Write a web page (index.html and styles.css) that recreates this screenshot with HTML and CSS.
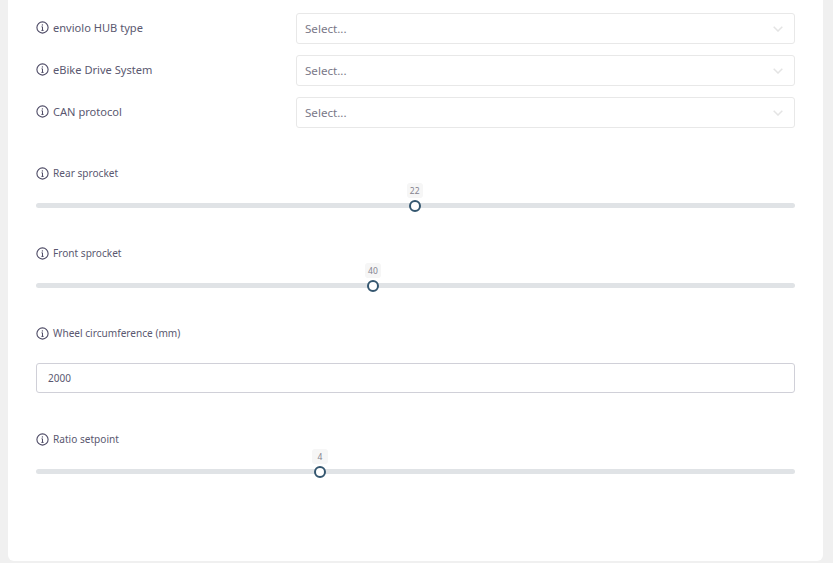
FILE: index.html
```html
<!DOCTYPE html>
<html lang="en">
<head>
<meta charset="utf-8">
<title>Configuration</title>
<link rel="stylesheet" href="styles.css">
</head>
<body>
<svg class="defs" width="0" height="0" aria-hidden="true">
  <symbol id="info" viewBox="0 0 13 13">
    <circle cx="6.5" cy="6.5" r="5.6" fill="none" stroke="currentColor" stroke-width="1.1"/>
    <path d="M6.5 5.8v3.6M5.4 9.4h2.2M5.5 5.8h1" fill="none" stroke="currentColor" stroke-width="1"/>
    <circle cx="6.4" cy="3.9" r=".7" fill="currentColor"/>
  </symbol>
  <symbol id="chev" viewBox="0 0 10 6">
    <path d="M.7.7 5 5 9.3.7" fill="none" stroke="currentColor" stroke-width="1.5"/>
  </symbol>
</svg>
<main class="card">
  <div class="select-row">
    <div class="label"><svg class="info"><use href="#info"/></svg><span>enviolo HUB type</span></div>
    <div class="select"><span>Select...</span><svg class="chev"><use href="#chev"/></svg></div>
  </div>
  <div class="select-row">
    <div class="label"><svg class="info"><use href="#info"/></svg><span>eBike Drive System</span></div>
    <div class="select"><span>Select...</span><svg class="chev"><use href="#chev"/></svg></div>
  </div>
  <div class="select-row">
    <div class="label"><svg class="info"><use href="#info"/></svg><span>CAN protocol</span></div>
    <div class="select"><span>Select...</span><svg class="chev"><use href="#chev"/></svg></div>
  </div>

  <section class="field first">
    <div class="label small"><svg class="info"><use href="#info"/></svg><span>Rear sprocket</span></div>
    <div class="slider">
      <div class="track"></div>
      <div class="thumb" style="left:49.9%"><span class="bubble">22</span></div>
    </div>
  </section>

  <section class="field">
    <div class="label small"><svg class="info"><use href="#info"/></svg><span>Front sprocket</span></div>
    <div class="slider">
      <div class="track"></div>
      <div class="thumb" style="left:44.4%"><span class="bubble">40</span></div>
    </div>
  </section>

  <section class="field">
    <div class="label small"><svg class="info"><use href="#info"/></svg><span>Wheel circumference (mm)</span></div>
    <div class="text-input">2000</div>
  </section>

  <section class="field ratio">
    <div class="label small"><svg class="info"><use href="#info"/></svg><span>Ratio setpoint</span></div>
    <div class="slider">
      <div class="track"></div>
      <div class="thumb" style="left:37.4%"><span class="bubble">4</span></div>
    </div>
  </section>
</main>
</body>
</html>
```
FILE: styles.css
```css
* { box-sizing: border-box; }
html, body { margin: 0; height: 563px; overflow: hidden; }
body {
  background: #f0f0f0;
  padding: 0 10px 2px 8px;
  font-family: "Noto Sans", "Open Sans", sans-serif;
  color: #5a5870;
}
.defs { position: absolute; }
.card {
  height: 561px;
  background: #fff;
  border-radius: 0 0 6px 6px;
  padding: 13px 28px 0;
  display: flex;
  flex-direction: column;
}
.select-row {
  display: flex;
  align-items: center;
  height: 31px;
  margin-bottom: 11px;
}
.select-row .label { width: 260px; padding-bottom: 2px; }
.label {
  display: flex;
  align-items: center;
  gap: 4px;
  font-size: 11.1px;
  line-height: 16px;
  color: #5a5870;
}
.label.small { font-size: 10.1px; }
.info { width: 13px; height: 13px; flex: none; color: #4e4b66; }
.select {
  flex: 1;
  height: 31px;
  border: 1px solid #e8e8e8;
  border-radius: 3px;
  padding: 0 11px 0 8px;
  display: flex;
  align-items: center;
  justify-content: space-between;
  font-size: 11.6px;
  color: #7a7888;
}
.chev { width: 10px; height: 6px; color: #e4e4e4; }
.field { height: 80px; }
.field.first { margin-top: 26px; }
.slider { position: relative; height: 12px; margin-top: 19px; }
.track {
  position: absolute;
  left: 0; right: 0; top: 3px;
  height: 5px;
  background: #e0e3e6;
  border-radius: 2.5px;
}
.thumb {
  position: absolute;
  top: 0;
  width: 12px;
  height: 12px;
  margin-left: -6px;
  border: 2px solid #34566f;
  border-radius: 50%;
  background: #fff;
}
.bubble {
  position: absolute;
  left: 50%;
  bottom: 12px;
  transform: translateX(-50%);
  min-width: 16px;
  height: 15px;
  padding: 0 3px;
  background: #f6f6f6;
  border-radius: 3px;
  font-size: 8.5px;
  line-height: 15px;
  text-align: center;
  color: #85838f;
}
.text-input {
  margin-top: 22px;
  height: 30px;
  border: 1px solid #d0d0d8;
  border-radius: 3px;
  padding: 0 11px;
  display: flex;
  align-items: center;
  font-size: 10px;
  color: #5a5870;
}
.ratio { margin-top: 26px; }
```
